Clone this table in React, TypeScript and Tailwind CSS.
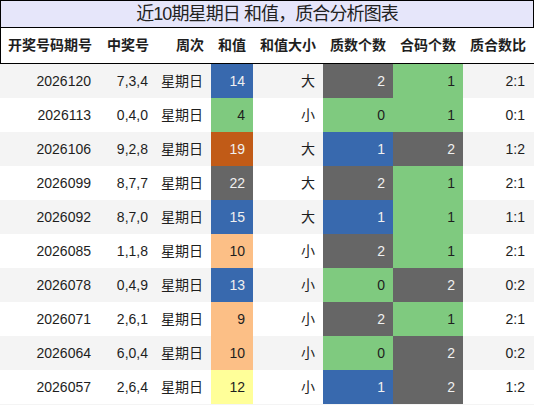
import React from "react";

type Row = {
  id: string;
  nums: string;
  sum: number;
  sumBg: string;
  sumLight: boolean;
  size: string;
  p: number;
  c: number;
  ratio: string;
};

const BLUE = "bg-[#3869ae]";
const GREEN = "bg-[#7fca7f]";
const GRAY = "bg-[#666666]";
const ORANGE = "bg-[#c15b17]";
const PEACH = "bg-[#fcbf86]";
const YELLOW = "bg-[#ffff99]";

const rows: Row[] = [
  { id: "2026120", nums: "7,3,4", sum: 14, sumBg: BLUE, sumLight: true, size: "大", p: 2, c: 1, ratio: "2:1" },
  { id: "2026113", nums: "0,4,0", sum: 4, sumBg: GREEN, sumLight: false, size: "小", p: 0, c: 1, ratio: "0:1" },
  { id: "2026106", nums: "9,2,8", sum: 19, sumBg: ORANGE, sumLight: true, size: "大", p: 1, c: 2, ratio: "1:2" },
  { id: "2026099", nums: "8,7,7", sum: 22, sumBg: GRAY, sumLight: true, size: "大", p: 2, c: 1, ratio: "2:1" },
  { id: "2026092", nums: "8,7,0", sum: 15, sumBg: BLUE, sumLight: true, size: "大", p: 1, c: 1, ratio: "1:1" },
  { id: "2026085", nums: "1,1,8", sum: 10, sumBg: PEACH, sumLight: false, size: "小", p: 2, c: 1, ratio: "2:1" },
  { id: "2026078", nums: "0,4,9", sum: 13, sumBg: BLUE, sumLight: true, size: "小", p: 0, c: 2, ratio: "0:2" },
  { id: "2026071", nums: "2,6,1", sum: 9, sumBg: PEACH, sumLight: false, size: "小", p: 2, c: 1, ratio: "2:1" },
  { id: "2026064", nums: "6,0,4", sum: 10, sumBg: PEACH, sumLight: false, size: "小", p: 0, c: 2, ratio: "0:2" },
  { id: "2026057", nums: "2,6,4", sum: 12, sumBg: YELLOW, sumLight: false, size: "小", p: 1, c: 2, ratio: "1:2" },
];

function countCell(v: number) {
  if (v === 0) return { bg: GREEN, light: false };
  if (v === 1) return { bg: BLUE, light: true };
  return { bg: GRAY, light: true };
}
function compCell(v: number) {
  if (v === 1) return { bg: GREEN, light: false };
  return { bg: GRAY, light: true };
}

const cols = "grid grid-cols-[99px_57px_55px_42px_70px_70px_70px_71px]";
const headers = ["开奖号码期号", "中奖号", "周次", "和值", "和值大小", "质数个数", "合码个数", "质合数比"];

const cell = "flex items-center justify-end pr-[8px] whitespace-nowrap";

export default function App() {
  return (
    <div
      className="w-[534px] h-[405px] bg-[#f4f4f4] text-[#1e1e1e] overflow-hidden"
      style={{ fontFamily: '"Liberation Sans", "Noto Sans CJK SC", sans-serif' }}
    >
      <div className="h-[28px] border border-black bg-[#e6e6fa] flex items-center justify-center text-[18px] tracking-[-0.9px] leading-none text-[#222]">
        近10期星期日 和值，质合分析图表
      </div>
      <div className={`${cols} h-[36px] bg-white border-l border-b border-black`}>
        {headers.map((h, i) => (
          <div key={h} className={`${cell} text-[14px] font-bold ${i === 7 ? "pr-[9px]" : ""}`}>
            {h}
          </div>
        ))}
      </div>
      {rows.map((r, i) => {
        const pc = countCell(r.p);
        const cc = compCell(r.c);
        return (
          <div key={r.id} className={`${cols} h-[34px] text-[14px] ${i % 2 === 0 ? "bg-[#f4f4f4]" : "bg-white"}`}>
            <div className={cell}>{r.id}</div>
            <div className={cell}>{r.nums}</div>
            <div className={cell}>星期日</div>
            <div className={`${cell} ${r.sumBg} ${r.sumLight ? "text-[#f0f0f0]" : "text-[#1e1e1e]"}`}>{r.sum}</div>
            <div className={cell}>{r.size}</div>
            <div className={`${cell} pr-[7px] ${pc.bg} ${pc.light ? "text-[#f0f0f0]" : "text-[#1e1e1e]"}`}>{r.p}</div>
            <div className={`${cell} pr-[7px] ${cc.bg} ${cc.light ? "text-[#f0f0f0]" : "text-[#1e1e1e]"}`}>{r.c}</div>
            <div className={`${cell} pr-[9px]`}>{r.ratio}</div>
          </div>
        );
      })}
    </div>
  );
}
